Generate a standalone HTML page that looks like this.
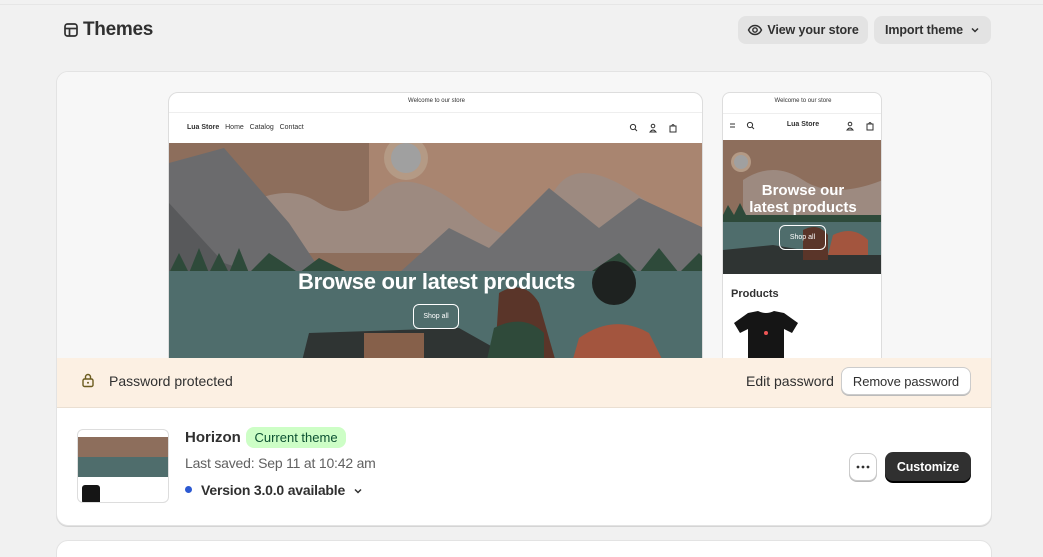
<!DOCTYPE html>
<html><head><meta charset="utf-8"><style>
*{box-sizing:border-box;margin:0;padding:0}
html,body{width:1043px;height:557px;overflow:hidden}
body{background:#f1f1f1;font-family:"Liberation Sans",sans-serif;color:#303030;position:relative}
.abs{position:absolute}
.btn{position:absolute;border-radius:8px;font-size:12.5px;font-weight:bold;display:flex;align-items:center;justify-content:center;letter-spacing:-0.1px}
</style></head><body>
<div class="abs" style="left:0;top:0;width:1043px;height:5px;border-bottom:1px solid #e6e6e6"></div>
<svg class="abs" style="left:63px;top:22px" width="16" height="16" viewBox="0 0 16 16"><rect x="2" y="2" width="12" height="12" rx="2.5" fill="none" stroke="#303030" stroke-width="1.7"/><line x1="2" y1="6.5" x2="14" y2="6.5" stroke="#303030" stroke-width="1.7"/><line x1="6.5" y1="6.5" x2="6.5" y2="14" stroke="#303030" stroke-width="1.7"/></svg>
<div class="abs" style="left:83px;top:19px;font-size:19px;font-weight:bold;letter-spacing:-0.3px">Themes</div>
<div class="btn" style="left:738px;top:16px;width:130px;height:28px;background:#e3e3e3;color:#303030"><svg width="16" height="16" viewBox="0 0 16 16" style="margin-right:4px"><path d="M1.5 8C3 5 5.3 3.5 8 3.5S13 5 14.5 8C13 11 10.7 12.5 8 12.5S3 11 1.5 8Z" fill="none" stroke="#303030" stroke-width="1.4"/><circle cx="8" cy="8" r="2.2" fill="none" stroke="#303030" stroke-width="1.4"/></svg>View your store</div>
<div class="btn" style="left:874px;top:16px;width:117px;height:28px;background:#e3e3e3">Import theme<svg width="10" height="10" viewBox="0 0 10 10" style="margin-left:7px"><path d="M2 3.5l3 3 3-3" fill="none" stroke="#303030" stroke-width="1.5"/></svg></div>

<div class="abs" style="left:56px;top:71px;width:936px;height:455px;background:#fff;border:1px solid #e3e3e3;border-radius:12px;overflow:hidden;box-shadow:0 1px 0 #d4d4d4">
 <div class="abs" style="left:0;top:0;width:936px;height:286px;background:#f7f7f7"></div>
 <!-- desktop -->
 <div class="abs" style="left:111px;top:20px;width:535px;height:280px;background:#fff;border:1px solid #ddd;border-radius:10px;overflow:hidden">
  <div class="abs" style="left:0;top:5px;width:535px;text-align:center;font-size:6px">Welcome to our store</div>
  <div class="abs" style="left:0;top:19px;width:535px;border-top:1px solid #eee"></div>
  <div class="abs" style="left:18px;top:31px;font-size:7px"><b>Lua Store</b>&nbsp;&nbsp; Home &nbsp; Catalog &nbsp; Contact</div>
  <svg class="abs" style="left:460px;top:30px" width="50" height="10" viewBox="0 0 50 10"><circle cx="4" cy="4" r="2.6" fill="none" stroke="#303030" stroke-width="1"/><path d="M6 6l2 2" stroke="#303030"/><circle cx="24" cy="3" r="1.8" fill="none" stroke="#303030"/><path d="M21 9q3-4 6 0z" fill="none" stroke="#303030"/><rect x="41" y="3" width="6" height="6" fill="none" stroke="#303030"/><path d="M42.5 3q1.5-3 3 0" fill="none" stroke="#303030"/></svg>
  <svg class="abs" style="left:0;top:50px" width="535" height="230" viewBox="0 0 535 230">
   <rect width="535" height="230" fill="#8d6e5c"/>
   <path d="M200 0h335v110H200z" fill="#a98570"/>
   <circle cx="237" cy="15" r="22" fill="#b49a85"/><circle cx="237" cy="15" r="15" fill="#a0a0a0"/>
   <path d="M80 60q40-20 70 0t60-10 90 20 80-10 100 0v50H80z" fill="#9d8a80"/>
   <path d="M0 20L55 5 120 80 160 140 180 130H0z" fill="#6b6b6d"/>
   <path d="M0 60l55 60 30 10H0z" fill="#58595b"/>
   <path d="M230 130l50-45 40 20 60-60 50 40 40-30 65 30v45z" fill="#6f6f71"/>
   <path d="M0 130l10-20 10 20 10-25 10 25 10-20 10 20 10-25 10 25 20-20 30 20 20-15 30 15 240 0 30-20 20 20 20-25 20 25 20-20 20 20V135H0z" fill="#2e4a3a"/>
   <rect y="128" width="535" height="102" fill="#4f6d6c"/>
   <path d="M130 230l10-40 150-5 80 45z" fill="#2f3433"/>
   <path d="M195 190h60v40h-60z" fill="#86604a"/>
   <path d="M330 150q25-15 40 10l20 70h-65z" fill="#5a3529"/>
   <path d="M325 185q30-15 50 5v40h-60z" fill="#2f4a3a"/>
   <circle cx="445" cy="140" r="22" fill="#1e2220"/>
   <path d="M410 195q35-25 70-5l20 40h-100z" fill="#a3553e"/>
  </svg>
  <div class="abs" style="left:0;top:176px;width:535px;text-align:center;color:#fff;font-size:22px;font-weight:bold;letter-spacing:-0.3px">Browse our latest products</div>
  <div class="abs" style="left:244px;top:211px;width:46px;height:25px;border:1px solid #fff;border-radius:6px;color:#fff;font-size:7px;text-align:center;line-height:23px">Shop all</div>
 </div>
 <!-- mobile -->
 <div class="abs" style="left:665px;top:20px;width:160px;height:280px;background:#fff;border:1px solid #ddd;border-radius:8px;overflow:hidden">
  <div class="abs" style="left:0;top:5px;width:160px;text-align:center;font-size:6px">Welcome to our store</div>
  <div class="abs" style="left:0;top:20px;width:160px;border-top:1px solid #eee"></div>
  <div class="abs" style="left:0;top:28px;width:160px;text-align:center;font-size:7px;font-weight:bold">Lua Store</div>
  <svg class="abs" style="left:6px;top:28px" width="150" height="10" viewBox="0 0 150 10"><path d="M1 3h5M1 6h5" stroke="#303030"/><circle cx="21" cy="4" r="2.6" fill="none" stroke="#303030"/><path d="M23 6l2 2" stroke="#303030"/><circle cx="121" cy="3" r="1.8" fill="none" stroke="#303030"/><path d="M118 9q3-4 6 0z" fill="none" stroke="#303030"/><rect x="138" y="3" width="6" height="6" fill="none" stroke="#303030"/><path d="M139.5 3q1.5-3 3 0" fill="none" stroke="#303030"/></svg>
  <svg class="abs" style="left:0;top:47px" width="160" height="134" viewBox="0 0 160 134">
   <rect width="160" height="134" fill="#8d6e5c"/>
   <path d="M20 40q30-20 60 0t80 0v40H20z" fill="#9d8a80"/>
   <circle cx="18" cy="22" r="10" fill="#b49a85"/><circle cx="18" cy="22" r="7" fill="#a0a0a0"/>
   <path d="M0 75l5-10 6 10 6-12 6 12h137v10H0z" fill="#2e4a3a"/>
   <rect y="82" width="160" height="52" fill="#4f6d6c"/>
   <path d="M0 110l50-5 60 10h50v19H0z" fill="#2f3433"/>
   <path d="M80 90q15-8 25 5v25H80z" fill="#5a3529"/>
   <path d="M110 95q20-10 35 5v15h-40z" fill="#a3553e"/>
  </svg>
  <div class="abs" style="left:0;top:89px;width:160px;text-align:center;color:#fff;font-size:15px;font-weight:bold;line-height:17px">Browse our<br>latest products</div>
  <div class="abs" style="left:56px;top:132px;width:47px;height:25px;border:1px solid #fff;border-radius:6px;color:#fff;font-size:7px;text-align:center;line-height:23px">Shop all</div>
  <div class="abs" style="left:8px;top:195px;font-size:11px;font-weight:bold">Products</div>
  <svg class="abs" style="left:9px;top:218px" width="68" height="50" viewBox="0 0 68 50"><path d="M16 2l10-2q8 4 16 0l10 2 14 10-6 10-8-4v32H16V18l-8 4-6-10z" fill="#151515"/><circle cx="34" cy="22" r="2" fill="#e55"/></svg>
 </div>
 <!-- banner -->
 <div class="abs" style="left:0;top:286px;width:936px;height:50px;background:#fcf0e3;border-bottom:1px solid #eadfd2"></div>
 <svg class="abs" style="left:23px;top:300px" width="16" height="16" viewBox="0 0 16 16"><rect x="3" y="7" width="10" height="7.5" rx="1.5" fill="none" stroke="#6b5b1e" stroke-width="1.4"/><path d="M5.5 7V5a2.5 2.5 0 015 0v2" fill="none" stroke="#6b5b1e" stroke-width="1.4"/><circle cx="8" cy="10.8" r="1" fill="#6b5b1e"/></svg>
 <div class="abs" style="left:52px;top:301px;font-size:14px">Password protected</div>
 <div class="abs" style="left:689px;top:301px;font-size:14px">Edit password</div>
 <div class="btn" style="left:784px;top:295px;width:130px;height:28px;background:#fff;border:1px solid #ccc;box-shadow:0 1px 0 #bbb;font-weight:normal;font-size:13px;color:#303030">Remove password</div>
 <!-- theme row -->
 <div class="abs" style="left:20px;top:357px;width:92px;height:74px;border:1px solid #ddd;border-radius:6px;overflow:hidden;background:#fff">
  <div class="abs" style="left:0;top:7px;width:92px;height:40px;background:#8d6e5c"></div>
  <div class="abs" style="left:0;top:27px;width:92px;height:20px;background:#4f6d6c"></div>
  <div class="abs" style="left:4px;top:55px;width:18px;height:17px;background:#151515;border-radius:3px 3px 0 0"></div>
 </div>
 <div class="abs" style="left:128px;top:357px;font-size:15px;font-weight:bold">Horizon</div>
 <div class="abs" style="left:189px;top:355px;width:100px;height:21px;background:#cdfec6;border-radius:8px;font-size:13px;color:#0c5132;text-align:center;line-height:21px">Current theme</div>
 <div class="abs" style="left:128px;top:383px;font-size:14px;color:#616161;letter-spacing:-0.2px">Last saved: Sep 11 at 10:42 am</div>
 <div class="abs" style="left:128px;top:414px;width:7px;height:7px;border-radius:50%;background:#2c59d2"></div>
 <div class="abs" style="left:144px;top:410px;font-size:14px;font-weight:bold;letter-spacing:-0.2px">Version 3.0.0 available</div>
 <svg class="abs" style="left:296px;top:414px" width="10" height="10" viewBox="0 0 10 10"><path d="M2 3.5l3 3 3-3" fill="none" stroke="#303030" stroke-width="1.5"/></svg>
 <div class="btn" style="left:792px;top:381px;width:28px;height:28px;background:#fff;border:1px solid #ccc;box-shadow:0 1px 0 #bbb"><svg width="16" height="4" viewBox="0 0 16 4"><circle cx="3" cy="2" r="1.4" fill="#303030"/><circle cx="8" cy="2" r="1.4" fill="#303030"/><circle cx="13" cy="2" r="1.4" fill="#303030"/></svg></div>
 <div class="btn" style="left:828px;top:380px;width:86px;height:29px;background:#303030;color:#fff;box-shadow:0 2px 0 #000">Customize</div>
</div>
<div class="abs" style="left:56px;top:540px;width:936px;height:40px;background:#fff;border:1px solid #e3e3e3;border-radius:12px"></div>
</body></html>
